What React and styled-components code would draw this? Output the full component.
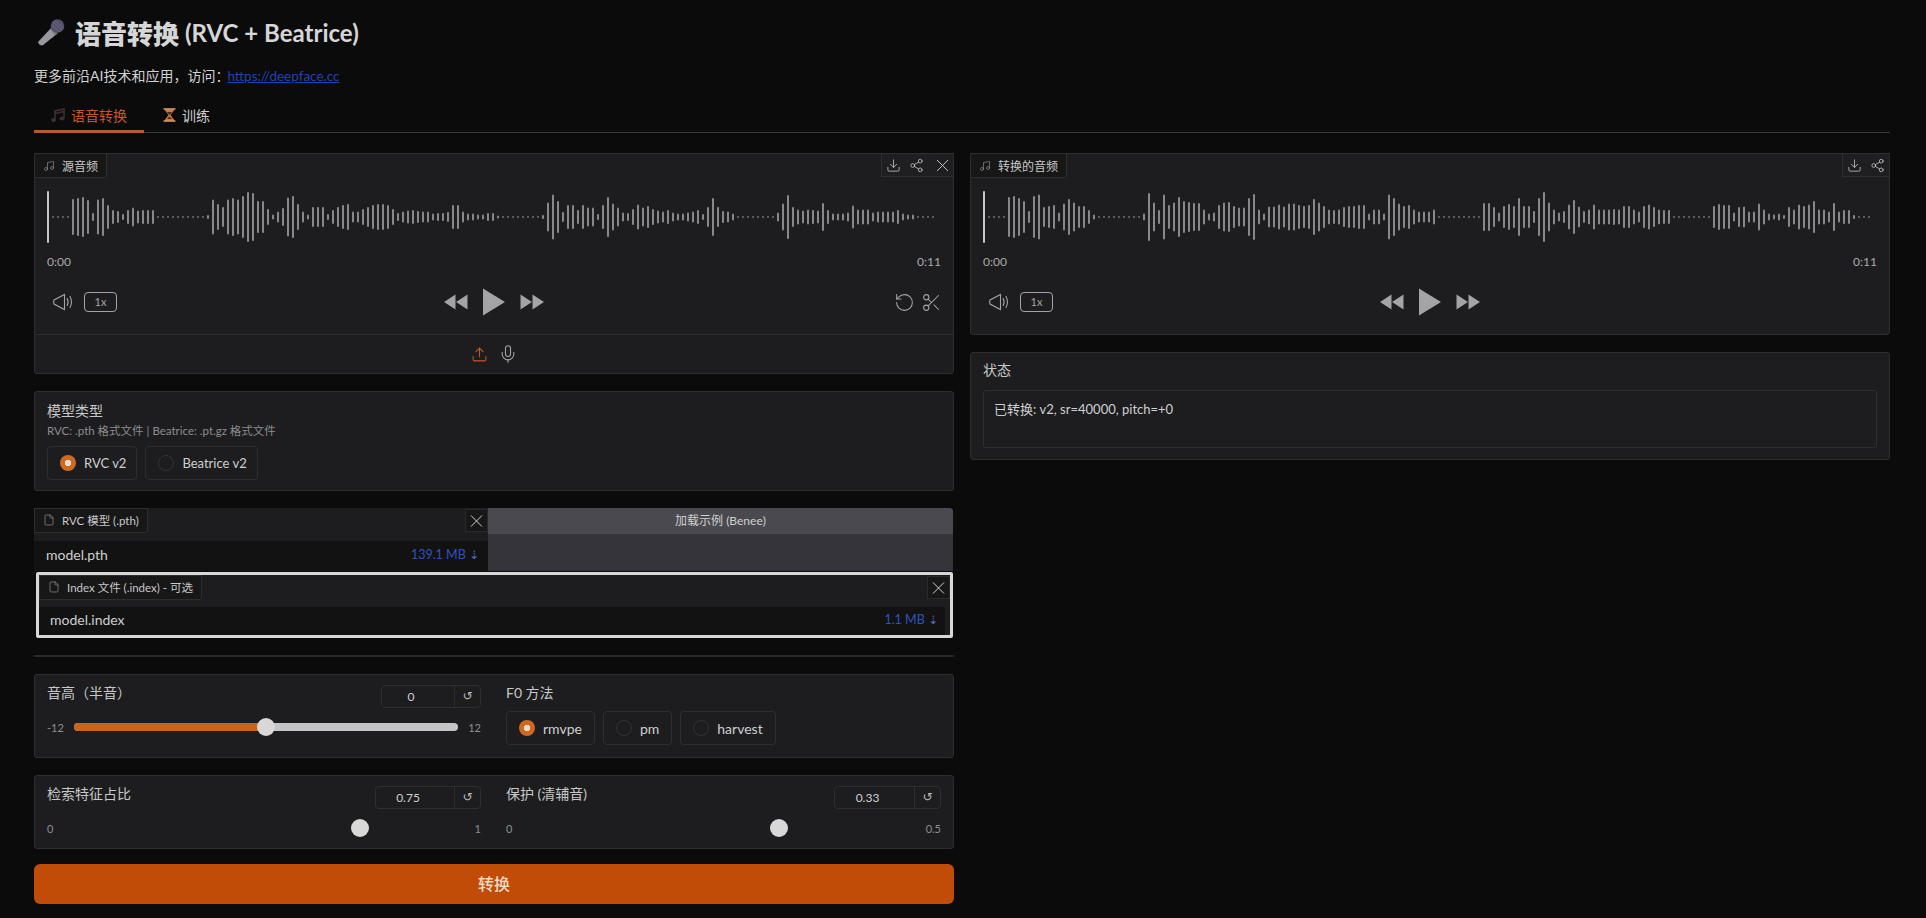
import styled, { createGlobalStyle } from "styled-components";
import {
  Download,
  File,
  Mic,
  Music,
  RotateCcw,
  Scissors,
  Share2,
  Upload,
  X,
} from "lucide-react";

const WAVE_LEN = 178;

const buildWave = (segments) => {
  const bars = new Array(WAVE_LEN).fill(0);
  segments.forEach(([start, heights]) => {
    heights.forEach((h, i) => {
      bars[start + i] = h;
    });
  });
  return bars;
};

const sourceWave = buildWave([
  [5, [36, 38, 40, 34, 8, 35, 38, 24, 14, 12, 6, 14, 19, 13, 14, 14, 14]],
  [
    32,
    [
      4, 35, 26, 20, 35, 38, 35, 42, 50, 48, 32, 32, 16, 5, 11, 18, 39, 42, 26, 11, 5, 20, 20, 20, 6,
      14, 20, 24, 26, 11, 11, 16, 20, 24, 26, 26, 24, 16, 8, 11, 13, 14, 12, 11, 11, 7, 8, 8, 10, 24,
      24, 11, 7, 7, 5, 5, 8, 8, 3,
    ],
  ],
  [
    99,
    [
      4, 29, 45, 32, 10, 24, 24, 14, 24, 19, 19, 6, 24, 40, 27, 19, 9, 8, 16, 25, 19, 22, 16, 13, 11,
      14, 9, 7, 7, 9, 11, 14, 6, 20, 38, 20, 12, 11, 7,
    ],
  ],
  [
    146,
    [
      9, 27, 44, 20, 15, 13, 15, 14, 13, 28, 14, 7, 7, 7, 9, 23, 15, 15, 15, 9, 11, 11, 11, 11, 14, 7,
      5, 5,
    ],
  ],
]);

const outputWave = buildWave([
  [5, [40, 42, 38, 32, 12, 42, 45, 20, 22, 24, 9, 27, 36, 29, 22, 22, 14, 5]],
  [
    32,
    [
      7, 48, 29, 14, 45, 24, 29, 40, 32, 30, 28, 28, 15, 7, 9, 24, 29, 30, 22, 19, 19, 38, 46, 15, 7,
      21, 21, 25, 21, 27, 27, 24, 22, 24, 36, 29, 22, 15, 14, 15, 20, 22, 22, 24, 24, 7, 15, 15, 7, 45,
      38, 27, 22, 24, 15, 11, 11, 11, 15,
    ],
  ],
  [
    100,
    [
      28, 28, 20, 9, 22, 26, 22, 38, 22, 22, 12, 38, 50, 29, 15, 9, 12, 25, 34, 21, 12, 15, 25, 15, 15,
      15, 16, 15, 22, 22, 15, 11, 22, 25, 20, 15, 14, 14,
    ],
  ],
  [
    146,
    [
      22, 26, 24, 24, 9, 20, 21, 11, 11, 27, 15, 7, 5, 7, 4, 20, 15, 25, 22, 25, 32, 15, 15, 11, 28, 11,
      14, 14, 4,
    ],
  ],
]);

const Waveform = ({ bars }) => (
  <WaveSvg width="890" height="56" viewBox="0 0 890 56">
    {bars.map((h, i) =>
      h === 0 ? (
        <rect key={i} x={i * 5} y="27.2" width="2" height="1.5" fill="#6f6f72" />
      ) : (
        <rect key={i} x={i * 5} y={28 - h / 2} width="2" height={h} rx="1" fill="#88888c" />
      )
    )}
    <rect x="0" y="2" width="2" height="52" rx="1" fill="#c6c6c8" />
  </WaveSvg>
);

const MicEmoji = () => (
  <svg width="28" height="28" viewBox="0 0 28 28">
    <path d="M15 9 L20.500 15.500 L5.500 27.500 Q2 27.500 1 24 Z" fill="#98989e" />
    <path d="M15 9.500 L20.500 15.500 L18 17 L13.500 11.500 Z" fill="#77777e" />
    <circle cx="20.500" cy="8" r="6.800" fill="#55506c" />
    <path d="M16 4 L25 12 M18 2.500 L26.500 10 M14.500 7 L23 14" stroke="#6e6888" strokeWidth="1" />
  </svg>
);

const NoteEmoji = () => (
  <svg width="14" height="15" viewBox="0 0 14 15">
    <path
      d="M4 11.500 V3 L13 1 V10 M4 5.500 L13 3.500"
      fill="none"
      stroke="#3c2f31"
      strokeWidth="1.600"
    />
    <ellipse cx="2.500" cy="12" rx="2.500" ry="2" fill="#3c2f31" />
    <ellipse cx="11" cy="10.500" rx="2.500" ry="2" fill="#3c2f31" />
  </svg>
);

const TrainEmoji = () => (
  <svg width="13" height="14" viewBox="0 0 13 14">
    <path d="M1 1 H12 L7.500 7 L12 13 H1 L5.500 7 Z" fill="#c97a3c" />
    <path d="M4 4 H9 L6.500 7 Z M4 11 L6.500 8.500 L9 11 Z" fill="#3a2a20" />
    <path d="M0.500 0.800 H12.500 M0.500 13.200 H12.500" stroke="#e0a070" strokeWidth="1.200" />
  </svg>
);

const VolumeIcon = () => (
  <svg width="22" height="18" viewBox="0 0 22 18" fill="none" stroke="#a4a4a6" strokeWidth="1.100">
    <path d="M1 7 L11.500 1.500 V16.500 L1 11 Q0.400 9 1 7 Z" />
    <path d="M14.200 5.500 Q16 9 14.200 12.500 M17 3.500 Q20 9 17 14.500" strokeLinecap="round" />
  </svg>
);

const Rewind = () => (
  <svg width="24" height="16" viewBox="0 0 24 16" fill="#a4a4a6">
    <path d="M0 8 L11.500 0.500 V15.500 Z M12 8 L23.500 0.500 V15.500 Z" />
  </svg>
);

const Forward = () => (
  <svg width="24" height="16" viewBox="0 0 24 16" fill="#a4a4a6">
    <path d="M0.500 0.500 L12 8 L0.500 15.500 Z M12.500 0.500 L24 8 L12.500 15.500 Z" />
  </svg>
);

const Play = () => (
  <svg width="24" height="28" viewBox="0 0 24 28" fill="#a4a4a6">
    <path d="M1 0.500 L23 14 L1 27.500 Z" />
  </svg>
);

const AudioBody = ({ bars, editable }) => (
  <>
    <WaveWrap>
      <Waveform bars={bars} />
    </WaveWrap>
    <TimeRow>
      <span>0:00</span>
      <span>0:11</span>
    </TimeRow>
    <Controls>
      <ControlSide>
        <VolumeIcon />
        <Speed>1x</Speed>
      </ControlSide>
      <ControlCenter>
        <Rewind />
        <Play />
        <Forward />
      </ControlCenter>
      <ControlSide $end>
        {editable && (
          <>
            <RotateCcw size={21} strokeWidth={1.2} color="#a4a4a6" />
            <Scissors size={21} strokeWidth={1.2} color="#a4a4a6" />
          </>
        )}
      </ControlSide>
    </Controls>
  </>
);

const Radio = ({ label, checked, small }) => (
  <RadioBox $small={small}>
    <RadioDot $checked={checked} />
    {label}
  </RadioBox>
);

const FileCell = ({ label, name, size, highlight }) => (
  <FileBox $highlight={highlight}>
    <FileHead $highlight={highlight}>
      <BlockLabel>
        <File size={12} strokeWidth={1.5} color="#8a8a8c" />
        {label}
      </BlockLabel>
      <CloseBox>
        <X size={22} strokeWidth={1.1} color="#d8d8d8" />
      </CloseBox>
    </FileHead>
    <FileRow $highlight={highlight}>
      <span>{name}</span>
      <FileSize>
        {size} <DashArrow>⇣</DashArrow>
      </FileSize>
    </FileRow>
  </FileBox>
);

const NumberBox = ({ value, width }) => (
  <NumberField $width={width}>
    <NumberValue>{value}</NumberValue>
    <ResetBtn>↺</ResetBtn>
  </NumberField>
);

const Slider = ({ min, max, pct, bare }) => (
  <SliderRow>
    <SliderEnd>{min}</SliderEnd>
    <Track $bare={bare}>
      {!bare && <TrackFill style={{ width: `calc((100% - 18px) * ${pct} + 9px)` }} />}
      <Thumb style={{ left: `calc((100% - 18px) * ${pct})` }} />
    </Track>
    <SliderEnd>{max}</SliderEnd>
  </SliderRow>
);

export default function App() {
  return (
    <>
      <GlobalStyle />
      <Page>
        <Title>
          <MicEmoji />
          <strong>语音转换</strong>
          <span>(RVC + Beatrice)</span>
        </Title>
        <Intro>
          更多前沿AI技术和应用，访问：<a href="#deepface">https://deepface.cc</a>
        </Intro>
        <Tabs>
          <Tab $active>
            <NoteEmoji />
            语音转换
          </Tab>
          <Tab>
            <TrainEmoji />
            训练
          </Tab>
        </Tabs>

        <Columns>
          <Column>
            <Panel>
              <BlockLabel $corner>
                <Music size={12} strokeWidth={1.4} color="#8a8a8c" />
                源音频
              </BlockLabel>
              <Tools $wide>
                <Download size={15} strokeWidth={1.3} />
                <Share2 size={15} strokeWidth={1.3} />
                <X size={21} strokeWidth={1.1} />
              </Tools>
              <AudioBody bars={sourceWave} editable />
              <SourceBar>
                <Upload size={17} strokeWidth={1.5} color="#c2591f" />
                <Mic size={20} strokeWidth={1.3} color="#a4a4a6" />
              </SourceBar>
            </Panel>

            <Panel>
              <FieldPad>
                <FieldLabel>模型类型</FieldLabel>
                <FieldHint>RVC: .pth 格式文件 | Beatrice: .pt.gz 格式文件</FieldHint>
                <RadioGroup>
                  <Radio label="RVC v2" checked small />
                  <Radio label="Beatrice v2" small />
                </RadioGroup>
              </FieldPad>
            </Panel>

            <FileStack>
              <FileTop>
                <FileCell label="RVC 模型 (.pth)" name="model.pth" size="139.1 MB" />
                <ExampleCell>
                  <ExampleHead>加载示例 (Benee)</ExampleHead>
                </ExampleCell>
              </FileTop>
              <FileCell
                label="Index 文件 (.index) - 可选"
                name="model.index"
                size="1.1 MB"
                highlight
              />
            </FileStack>

            <Rule />

            <Panel>
              <SliderGrid>
                <div>
                  <SliderHead>
                    <FieldLabel>音高（半音）</FieldLabel>
                    <NumberBox value="0" width={100} />
                  </SliderHead>
                  <Slider min="-12" max="12" pct={0.5} />
                </div>
                <div>
                  <FieldLabel $tall>F0 方法</FieldLabel>
                  <RadioGroup $tight>
                    <Radio label="rmvpe" checked />
                    <Radio label="pm" />
                    <Radio label="harvest" />
                  </RadioGroup>
                </div>
              </SliderGrid>
            </Panel>

            <Panel>
              <SliderGrid $short>
                <div>
                  <SliderHead>
                    <FieldLabel>检索特征占比</FieldLabel>
                    <NumberBox value="0.75" width={106} />
                  </SliderHead>
                  <Slider min="0" max="1" pct={0.75} bare />
                </div>
                <div>
                  <SliderHead>
                    <FieldLabel>保护 (清辅音)</FieldLabel>
                    <NumberBox value="0.33" width={107} />
                  </SliderHead>
                  <Slider min="0" max="0.5" pct={0.66} bare />
                </div>
              </SliderGrid>
            </Panel>

            <Convert>转换</Convert>
          </Column>

          <Column>
            <Panel>
              <BlockLabel $corner>
                <Music size={12} strokeWidth={1.4} color="#8a8a8c" />
                转换的音频
              </BlockLabel>
              <Tools>
                <Download size={15} strokeWidth={1.3} />
                <Share2 size={15} strokeWidth={1.3} />
              </Tools>
              <AudioBody bars={outputWave} />
            </Panel>

            <Panel>
              <StatusPad>
                <FieldLabel>状态</FieldLabel>
                <StatusBox>已转换: v2, sr=40000, pitch=+0</StatusBox>
              </StatusPad>
            </Panel>
          </Column>
        </Columns>
      </Page>
    </>
  );
}

const GlobalStyle = createGlobalStyle`
  * {
    box-sizing: border-box;
  }
  body {
    margin: 0;
    background: #0b0b0c;
    color: #d2d2d2;
    font-family: Lato, "Noto Sans CJK SC", "Noto Sans", sans-serif;
    font-size: 14px;
  }
`;

const Page = styled.div`
  width: 1926px;
  height: 918px;
  padding: 14px 36px 0 34px;
  overflow: hidden;
`;

const Title = styled.h1`
  display: flex;
  align-items: center;
  height: 36px;
  margin: 0;
  padding-left: 3px;
  font-size: 26px;
  font-weight: 700;
  color: #d6d6d6;

  svg {
    margin-right: 10px;
  }
  strong {
    margin-right: 6px;
  }
  span {
    font-size: 24px;
  }
`;

const Intro = styled.p`
  height: 20px;
  margin: 16px 0 0;
  line-height: 20px;
  color: #d2d2d2;

  a {
    margin-left: -2px;
    font-size: 13.5px;
    color: #2142b4;
  }
`;

const Tabs = styled.div`
  display: flex;
  height: 33px;
  margin-top: 14px;
  border-bottom: 1px solid #3a3a3c;
`;

const Tab = styled.div`
  display: flex;
  align-items: center;
  gap: 6px;
  height: 33px;
  padding: 0 ${(p) => (p.$active ? "17px" : "19px")};
  font-size: 14px;
  color: ${(p) => (p.$active ? "#c2592d" : "#cfcfcf")};
  border-bottom: 3px solid ${(p) => (p.$active ? "#b35a34" : "transparent")};
`;

const Columns = styled.div`
  display: grid;
  grid-template-columns: 920px 920px;
  gap: 16px;
  margin-top: 20px;
  align-items: start;
`;

const Column = styled.div`
  display: flex;
  flex-direction: column;
  gap: 17px;
`;

const Panel = styled.section`
  position: relative;
  background: #1d1d1f;
  border: 1px solid #2e2e30;
  border-radius: 3px;
`;

const BlockLabel = styled.div`
  display: flex;
  align-items: center;
  gap: 7px;
  height: 25px;
  padding: 0 8px;
  font-size: 12px;
  color: #c8c8c8;
  background: #171718;
  border: 1px solid #2e2e30;
  border-radius: 0 0 3px 0;
  ${(p) => (p.$corner ? "position: absolute; top: -1px; left: -1px;" : "")}
`;

const Tools = styled.div`
  position: absolute;
  top: -1px;
  right: -1px;
  display: flex;
  align-items: center;
  justify-content: space-between;
  width: ${(p) => (p.$wide ? "73px" : "48px")};
  height: 24px;
  padding: ${(p) => (p.$wide ? "0 0 0 4px" : "0 4px")};
  color: #c4c4c4;
  background: #1f1f21;
  border: 1px solid #2e2e30;
`;

const WaveWrap = styled.div`
  padding: 35px 12px 0;
  height: 99px;
`;

const WaveSvg = styled.svg`
  display: block;
`;

const TimeRow = styled.div`
  display: flex;
  justify-content: space-between;
  height: 18px;
  padding: 0 12px;
  font-size: 12px;
  line-height: 18px;
  color: #aaaaaa;
`;

const Controls = styled.div`
  display: grid;
  grid-template-columns: 1fr auto 1fr;
  align-items: center;
  height: 32px;
  margin-top: 15px;
  margin-bottom: 16px;
  padding: 0 11px 0 12px;

  & > div:first-child {
    padding-left: 6px;
  }
`;

const ControlSide = styled.div`
  display: flex;
  align-items: center;
  gap: ${(p) => (p.$end ? "6px" : "9px")};
  justify-content: ${(p) => (p.$end ? "flex-end" : "flex-start")};
`;

const ControlCenter = styled.div`
  display: flex;
  align-items: center;
  gap: 14px;
  margin-left: -2px;
`;

const Speed = styled.div`
  width: 33px;
  height: 20px;
  font-size: 11px;
  line-height: 18px;
  text-align: center;
  color: #a4a4a6;
  border: 1px solid #a4a4a6;
  border-radius: 4px;
`;

const SourceBar = styled.div`
  display: flex;
  align-items: center;
  justify-content: center;
  gap: 10px;
  height: 39px;
  border-top: 1px solid #2e2e30;
`;

const FieldPad = styled.div`
  padding: 9px 12px 10px;
`;

const FieldLabel = styled.div`
  font-size: 14px;
  line-height: 20px;
  color: #c8c8c8;
  ${(p) => (p.$tall ? "margin-bottom: 8px;" : "")}
`;

const FieldHint = styled.div`
  margin-top: 1px;
  font-size: 11.5px;
  line-height: 18px;
  color: #8c8c8e;
`;

const RadioGroup = styled.div`
  display: flex;
  gap: 8px;
  margin-top: ${(p) => (p.$tight ? "0" : "6px")};
`;

const RadioBox = styled.div`
  display: flex;
  align-items: center;
  gap: 8px;
  height: 34px;
  padding: ${(p) => (p.$small ? "0 10px 0 12px" : "0 12px")};
  font-size: ${(p) => (p.$small ? "13px" : "14px")};
  color: #cfcfcf;
  border: 1px solid #2e2e30;
  border-radius: 4px;
`;

const RadioDot = styled.span`
  width: 16px;
  height: 16px;
  border-radius: 50%;
  border: ${(p) => (p.$checked ? "none" : "1px solid #333335")};
  background: ${(p) =>
    p.$checked
      ? "radial-gradient(circle, #f2d8c4 0 3px, #cc6a24 3.5px)"
      : "transparent"};
`;

const FileStack = styled.div`
  display: flex;
  flex-direction: column;
  gap: 1px;
`;

const FileTop = styled.div`
  display: grid;
  grid-template-columns: 454px 465px;
`;

const FileBox = styled.div`
  height: ${(p) => (p.$highlight ? "66px" : "63px")};
  background: #1d1d1f;
  ${(p) =>
    p.$highlight
      ? `
    margin-left: 2px;
    margin-right: 1px;
    border: 3px solid #d8d8d8;
    border-radius: 2px;
  `
      : ""}
`;

const FileHead = styled.div`
  display: flex;
  align-items: flex-start;
  justify-content: space-between;
  height: ${(p) => (p.$highlight ? "32px" : "33px")};

  ${BlockLabel} {
    padding-bottom: 2px;
    font-size: 11.5px;
  }
`;

const CloseBox = styled.div`
  display: flex;
  align-items: center;
  justify-content: center;
  width: 23px;
  height: 23px;
  margin-top: 1px;
  background: #171718;
  border: 1px solid #2a2a2c;
`;

const FileRow = styled.div`
  display: flex;
  align-items: center;
  justify-content: space-between;
  height: ${(p) => (p.$highlight ? "28px" : "30px")};
  margin-right: ${(p) => (p.$highlight ? "5px" : "0")};
  padding: ${(p) => (p.$highlight ? "0 7px 3px 11px" : "0 9px 4px 12px")};
  font-size: 14px;
  color: #cfcfcf;
  background: #121213;
`;

const FileSize = styled.span`
  font-size: 12.5px;
  color: #2f52c0;
`;

const DashArrow = styled.span`
  font-family: "DejaVu Sans", sans-serif;
  font-size: 12px;
  color: #5a6fb8;
`;

const ExampleCell = styled.div`
  background: #34343a;
  border-radius: 0 4px 0 0;
`;

const ExampleHead = styled.div`
  height: 26px;
  font-size: 12px;
  line-height: 26px;
  text-align: center;
  color: #d0d0d0;
  background: #49494f;
  border-radius: 0 4px 0 0;
`;

const Rule = styled.hr`
  width: 100%;
  height: 2px;
  margin: 0;
  border: none;
  background: #2a2a2c;
`;

const SliderGrid = styled.div`
  display: grid;
  grid-template-columns: 434px 435px;
  gap: 25px;
  height: ${(p) => (p.$short ? "72px" : "82px")};
  padding: 8px 12px 0;
`;

const SliderHead = styled.div`
  display: flex;
  align-items: flex-start;
  justify-content: space-between;
  height: 32px;
`;

const NumberField = styled.div`
  display: flex;
  width: ${(p) => p.$width}px;
  height: 23px;
  margin-top: 2px;
  font-size: 12px;
  color: #cfcfcf;
  border: 1px solid #2e2e30;
  border-radius: 4px;
`;

const NumberValue = styled.div`
  flex: 1;
  padding-right: 14px;
  line-height: 22px;
  text-align: center;
`;

const ResetBtn = styled.div`
  width: 26px;
  line-height: 20px;
  font-family: "DejaVu Sans", sans-serif;
  text-align: center;
  color: #bdbdbd;
  border-left: 1px solid #2e2e30;
`;

const SliderRow = styled.div`
  display: flex;
  align-items: center;
  gap: 10px;
  height: 24px;
`;

const SliderEnd = styled.span`
  font-size: 11px;
  color: #8e8e90;
`;

const Track = styled.div`
  position: relative;
  flex: 1;
  height: 8px;
  border-radius: 4px;
  background: ${(p) => (p.$bare ? "transparent" : "#c4c4c4")};
`;

const TrackFill = styled.div`
  height: 100%;
  border-radius: 4px 0 0 4px;
  background: #c8651d;
`;

const Thumb = styled.div`
  position: absolute;
  top: -5px;
  width: 18px;
  height: 18px;
  border-radius: 50%;
  background: #d8d8d8;
`;

const Convert = styled.button`
  width: 100%;
  height: 40px;
  margin-top: -2px;
  padding-bottom: 3px;
  font-family: inherit;
  font-size: 16px;
  font-weight: 500;
  color: #f3dcc9;
  background: #c04c08;
  border: none;
  border-radius: 6px;
`;

const StatusPad = styled.div`
  height: 106px;
  padding: 7px 12px 0;
`;

const StatusBox = styled.div`
  height: 58px;
  margin-top: 10px;
  padding: 8px 10px;
  font-size: 13px;
  line-height: 20px;
  color: #cfcfcf;
  border: 1px solid #2e2e30;
  border-radius: 3px;
`;
